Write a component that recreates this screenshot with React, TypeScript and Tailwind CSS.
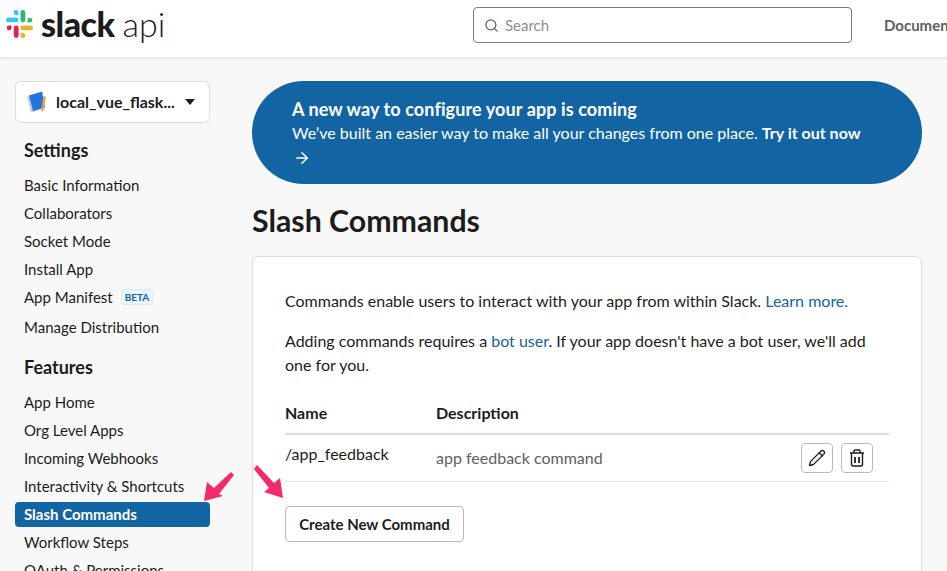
import React from 'react';
import { Search, ArrowRight, Pencil } from 'lucide-react';

const SETTINGS = ['Basic Information', 'Collaborators', 'Socket Mode', 'Install App'];
const FEATURES = ['App Home', 'Org Level Apps', 'Incoming Webhooks', 'Interactivity & Shortcuts'];

const NavItem = ({ label, active }: { label: string; active?: boolean }) => (
  <div className="h-[28px] flex items-center">
    <div
      className={`w-full h-[25px] pl-[9px] flex items-center rounded text-[15px] ${
        active ? 'bg-[#1264a3] text-white font-bold' : 'text-[#1d1c1d]'
      }`}
    >
      {label}
    </div>
  </div>
);

const SlackMark = () => (
  <svg width="28" height="28" viewBox="1 1 28 28" className="shrink-0">
    <g fill="#36c5f0">
      <rect x="1" y="8.500" width="12.500" height="4.800" rx="2.400" />
      <path d="M11 1a2.400 2.400 0 0 1 2.500 2.400v2.500H11A2.400 2.400 0 0 1 11 1z" />
    </g>
    <g fill="#2eb67d">
      <rect x="15.500" y="1" width="4.800" height="12.500" rx="2.400" />
      <path d="M22.500 13.500v-2.500a2.400 2.400 0 1 1 2.400 2.500z" />
    </g>
    <g fill="#e01e5a">
      <rect x="8.800" y="16.500" width="4.800" height="12.500" rx="2.400" />
      <path d="M6.500 16.500v2.500a2.400 2.400 0 1 1-2.400-2.500z" />
    </g>
    <g fill="#ecb22e">
      <rect x="15.500" y="16.500" width="12.500" height="4.800" rx="2.400" />
      <path d="M18 29a2.400 2.400 0 0 1-2.500-2.400v-2.500H18a2.400 2.400 0 0 1 0 4.900z" />
    </g>
  </svg>
);

const AppIcon = () => (
  <svg width="24" height="24" viewBox="0 0 24 24" className="shrink-0">
    <path d="M2 7l10-3 5 15-11 3.500z" fill="#c9ccd1" />
    <path d="M4 5.500l13-4 3 16-12 3.500z" fill="#2374e1" />
    <path d="M18.500 6l2.500.8-2.700 14-2.300.7z" fill="#e8a33a" />
  </svg>
);

const TrashIcon = () => (
  <svg width="16" height="18" viewBox="0 0 16 18" fill="none" stroke="#1d1c1d" strokeWidth="1.400">
    <path d="M1 4h14M5 3.800V2a1 1 0 0 1 1-1h4a1 1 0 0 1 1 1v1.800M2.500 4.500v10.700a1.800 1.800 0 0 0 1.800 1.800h7.400a1.800 1.800 0 0 0 1.800-1.800V4.500" />
    <path d="M6 8v6M10 8v6" strokeWidth="1.800" />
  </svg>
);

export default function App() {
  return (
    <div className="relative w-[947px] h-[571px] overflow-hidden bg-[#f8f8f8] text-[#1d1c1d] font-['Lato','Open_Sans',sans-serif]">
      {/* Header */}
      <header className="h-[57px] bg-white shadow-[0_1px_3px_rgba(0,0,0,0.12)] flex items-center relative z-10">
        <div className="w-[473px] shrink-0 pl-[6px] flex items-center pb-[10px]">
          <SlackMark />
          <span className="ml-[7px] text-[34px] leading-none font-black tracking-[-0.5px] text-[#1d1c1d]">slack</span>
          <span className="ml-[8px] text-[34px] leading-none font-light text-[#1d1c1d]">api</span>
        </div>
        <div className="w-[379px] h-[36px] mb-[7px] shrink-0 border border-[#7c7a7c] rounded flex items-center pl-[10px] gap-[6px]">
          <Search size={15} className="text-[#616061]" />
          <span className="text-[15px] text-[#8d8c8d]">Search</span>
        </div>
        <span className="ml-[32px] mb-[7px] text-[15px] font-bold text-[#616061] whitespace-nowrap">Documentation</span>
      </header>

      <div className="flex">
        {/* Sidebar */}
        <aside className="w-[252px] shrink-0 pl-[15px] pt-[24px]">
          <div className="w-[195px] h-[42px] bg-white border border-[#dddddd] rounded-md flex items-center pl-[9px] gap-[7px]">
            <AppIcon />
            <span className="text-[16px] font-bold whitespace-nowrap">local_vue_flask...</span>
            <span className="ml-[3px] w-0 h-0 border-x-[5px] border-x-transparent border-t-[6px] border-t-[#1d1c1d]" />
          </div>
          <div className="w-[195px]">
            <h2 className="pl-[9px] mt-[15px] mb-[9px] text-[18px] leading-[24px] font-bold">Settings</h2>
            {SETTINGS.map((s) => (
              <NavItem key={s} label={s} />
            ))}
            <div className="h-[28px] pl-[9px] mb-[2px] flex items-center text-[15px]">
              App Manifest
              <span className="ml-[8px] px-[3px] h-[16px] flex items-center rounded-[3px] bg-[#e8f5fa] border border-[#d5ebf5] text-[#1264a3] text-[10px] font-bold">
                BETA
              </span>
            </div>
            <NavItem label="Manage Distribution" />
            <h2 className="pl-[9px] mt-[14px] mb-[9px] text-[18px] leading-[24px] font-bold">Features</h2>
            {FEATURES.map((s) => (
              <NavItem key={s} label={s} />
            ))}
            <NavItem label="Slash Commands" active />
            <NavItem label="Workflow Steps" />
            <NavItem label="OAuth & Permissions" />
          </div>
        </aside>

        {/* Main */}
        <main className="w-[670px] shrink-0 pt-[24px]">
          <div className="h-[103px] rounded-[52px] bg-[#1264a3] text-white pl-[40px] pr-[50px] pt-[16px]">
            <div className="text-[18px] leading-[24px] font-bold tracking-[0.1px]">A new way to configure your app is coming</div>
            <div className="text-[16px] leading-[24px]">
              We’ve built an easier way to make all your changes from one place. <b>Try it out now</b>
            </div>
            <ArrowRight size={18} className="mt-[4px] ml-[1px]" />
          </div>

          <h1 className="mt-[15px] text-[30.3px] leading-[42px] font-bold">Slash Commands</h1>

          <div className="mt-[15px] h-[400px] bg-white border border-[#dddddd] rounded-md px-[32px] pt-[32px]">
            <p className="text-[16px] leading-[24px]">
              Commands enable users to interact with your app from within Slack.{' '}
              <span className="text-[#1264a3]">Learn more.</span>
            </p>
            <p className="mt-[16px] text-[16px] leading-[24px]">
              Adding commands requires a <span className="text-[#1264a3]">bot user</span>. If your app doesn't have a bot
              user, we'll add one for you.
            </p>

            <div className="mt-[24px] h-[34px] flex items-start border-b-2 border-[#dddddd] text-[16px] font-bold">
              <span className="w-[151px]">Name</span>
              <span>Description</span>
            </div>
            <div className="h-[47px] flex items-center border-b border-[#e8e8e8] text-[16px]">
              <span className="w-[151px] mb-[8px]">/app_feedback</span>
              <span className="text-[#616061] mb-[1px]">app feedback command</span>
              <div className="ml-auto mr-[16px] mb-[1px] flex gap-[8px]">
                <div className="w-[32px] h-[30px] border border-[#bbbabb] rounded flex items-center justify-center">
                  <Pencil size={18} strokeWidth={1.8} />
                </div>
                <div className="w-[32px] h-[30px] border border-[#bbbabb] rounded flex items-center justify-center">
                  <TrashIcon />
                </div>
              </div>
            </div>
            <button className="mt-[24px] w-[179px] h-[36px] bg-white border border-[#bbbabb] rounded text-[15px] font-bold text-[#1d1c1d]">
              Create New Command
            </button>
          </div>
        </main>
      </div>

      {/* Annotation arrows */}
      <svg width="36" height="36" viewBox="0 0 36 36" className="absolute left-[200px] top-[470px]">
        <path d="M4 31L7 12l7 6L31 2l3 3-15 19 4 2z" fill="#f5296b" />
      </svg>
      <svg width="32" height="36" viewBox="0 0 32 36" className="absolute left-[254px] top-[465px]">
        <path d="M3 0l17 18 6-5 3 20-19-6 5-4L0 4z" fill="#f5296b" />
      </svg>
    </div>
  );
}
